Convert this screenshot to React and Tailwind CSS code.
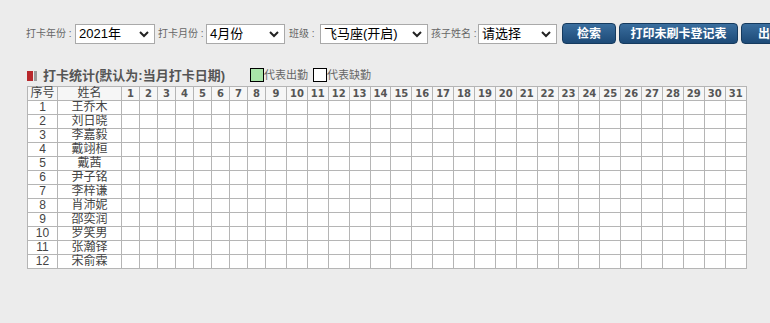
import React from "react";

const students = [
  "王乔木",
  "刘日晓",
  "李嘉毅",
  "戴翊桓",
  "戴茜",
  "尹子铭",
  "李梓谦",
  "肖沛妮",
  "邵奕润",
  "罗笑男",
  "张瀚铎",
  "宋俞霖",
];

const days = Array.from({ length: 31 }, (_, i) => i + 1);

const Chevron = () => (
  <svg width="10" height="8" viewBox="0 0 10 8" className="shrink-0">
    <path d="M1 2 L5 6 L9 2" fill="none" stroke="#222" strokeWidth="2" />
  </svg>
);

const FakeSelect = ({ value, width }) => (
  <div
    className={`${width} h-[20px] bg-white border border-[#a9a9a9] flex items-center justify-between pl-[3px] pr-[5px] text-[13px] text-black`}
  >
    <span>{value}</span>
    <Chevron />
  </div>
);

const Label = ({ children, className }) => (
  <span className={`text-[10px] text-[#666] whitespace-nowrap ${className}`}>{children}</span>
);

const BlueButton = ({ children, className }) => (
  <button
    className={`h-[21px] rounded-[4px] border border-[#153a5e] bg-gradient-to-b from-[#3a6e9e] to-[#1d4a77] text-white text-[12px] font-bold whitespace-nowrap overflow-hidden shrink-0 ${className}`}
  >
    {children}
  </button>
);

export default function App() {
  return (
    <div
      className="w-[770px] h-[323px] bg-[#ececec] overflow-hidden"
      style={{ fontFamily: '"Liberation Sans", "Noto Sans CJK SC", sans-serif' }}
    >
      <div className="flex items-center pt-[23px] pl-[26px] whitespace-nowrap">
        <Label className="w-[49px] shrink-0">打卡年份 :</Label>
        <FakeSelect value="2021年" width="w-[80px] shrink-0" />
        <Label className="ml-[3px] w-[48px] shrink-0">打卡月份 :</Label>
        <FakeSelect value="4月份" width="w-[79px] shrink-0" />
        <Label className="ml-[4px] w-[31px] shrink-0">班级 :</Label>
        <FakeSelect value="飞马座(开启)" width="w-[108px] shrink-0" />
        <Label className="ml-[3px] w-[47px] shrink-0">孩子姓名 :</Label>
        <FakeSelect value="请选择" width="w-[79px] shrink-0" />
        <BlueButton className="ml-[5px] w-[54px]">检索</BlueButton>
        <BlueButton className="ml-[3px] w-[119px]">打印未刷卡登记表</BlueButton>
        <BlueButton className="ml-[3px] w-[82px]">出勤汇总</BlueButton>
      </div>

      <div className="flex items-end pl-[27px] mt-[24px] h-[16px]">
        <div className="flex items-center h-[16px] w-[223px] shrink-0">
          <span className="w-[6px] h-[10px] bg-[#b8282c]" />
          <span className="w-[3px] h-[10px] bg-[#9a9a9a] ml-[1px]" />
          <span className="ml-[6px] text-[13px] leading-[16px] font-bold text-[#555] whitespace-nowrap">
            打卡统计(默认为:当月打卡日期)
          </span>
        </div>
        <div className="flex items-center mb-[2px]">
          <span className="w-[14px] h-[14px] bg-[#a8e4a8] border border-black" />
          <span className="text-[11px] text-[#666] leading-[14px]">代表出勤</span>
          <span className="ml-[5px] w-[14px] h-[14px] bg-white border border-black" />
          <span className="text-[11px] text-[#666] leading-[14px]">代表缺勤</span>
        </div>
      </div>

      <table className="ml-[27px] mt-[2px] border-collapse table-fixed w-[720px] bg-white">
        <colgroup>
          <col className="w-[30px]" />
          <col className="w-[64px]" />
          {days.map((d) => (
            <col key={d} className={d < 9 ? "w-[18px]" : "w-[20.9px]"} />
          ))}
        </colgroup>
        <thead>
          <tr className="h-[14px] bg-[#f6f6f6]">
            <th className="border border-[#b5b5b5] p-0 text-[12px] leading-[13px] font-normal text-[#444]">序号</th>
            <th className="border border-[#b5b5b5] p-0 text-[12px] leading-[13px] font-normal text-[#444]">姓名</th>
            {days.map((d) => (
              <th
                key={d}
                className="border border-[#b5b5b5] p-0 text-[10px] leading-[13px] font-bold text-[#555]"
                style={{ fontFamily: '"DejaVu Sans", sans-serif' }}
              >
                {d}
              </th>
            ))}
          </tr>
        </thead>
        <tbody>
          {students.map((name, i) => (
            <tr key={name} className="h-[14px]">
              <td className="border border-[#b5b5b5] p-0 text-center text-[12px] leading-[13px] text-[#444]">{i + 1}</td>
              <td className="border border-[#b5b5b5] p-0 text-center text-[12px] leading-[13px] text-[#444]">{name}</td>
              {days.map((d) => (
                <td key={d} className="border border-[#b5b5b5] p-0" />
              ))}
            </tr>
          ))}
        </tbody>
      </table>
    </div>
  );
}
